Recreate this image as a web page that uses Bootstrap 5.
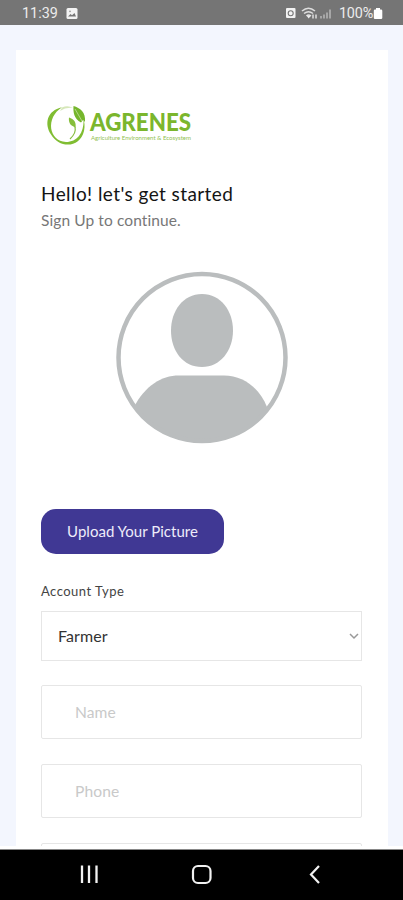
<!DOCTYPE html>
<html lang="en">
<head>
<meta charset="utf-8">
<meta name="viewport" content="width=device-width, initial-scale=1">
<title>Agrenes Sign Up</title>
<link href="https://cdn.jsdelivr.net/npm/bootstrap@5.3.0/dist/css/bootstrap.min.css" rel="stylesheet">
<style>
body{font-family:Lato,"Open Sans",sans-serif;height:900px;overflow:hidden;background:#fff}
.status-bar{height:25px;background:#757575;color:#ececec;font:14.4px/25px Roboto,sans-serif;padding:1px 20px 0 22px}
.page-area{height:821px;background:#f3f6fe;padding:25px 15px 0 16px}
.signup{height:796px;padding:48px 26px 0 25px}
.logo{display:block;height:56px;width:160px}
.heading{font-size:19px;line-height:24px;margin:28px 0 0;color:#141414;letter-spacing:.42px;white-space:nowrap}
.subhead{font-size:15.5px;line-height:24px;margin:2px 0 0;color:#777;letter-spacing:.1px;font-weight:400}
.avatar{display:block;width:174px;height:176px;margin:37px 0 0 73px}
.upload{width:183px;height:45px;margin-top:64px;border-radius:15px;background:#403894;color:#eeecfa;font-size:15px;letter-spacing:.02px;padding:0 0 1px}
.type-label{font-size:13px;line-height:20px;margin:27px 0 0;color:#444;letter-spacing:.48px}
.farm-select{height:50px;margin-top:10px;border:1px solid #e6e6e6;border-radius:0;padding:0 16px;color:#333;font-size:16px;letter-spacing:.1px;background-image:none}
.field{height:54px;border:1.5px solid #e6e6e6;border-radius:2px;padding:0 33px 1px;font-size:15.6px;letter-spacing:.1px}
.field::placeholder{color:#c9c9c9;opacity:1}
.fields{gap:25px}
.chevron{right:3px;top:21px}
.nav-keys{height:50px;background:#000}
.seam{height:4px;background:#fff;border-bottom:1px solid #888}
</style>
<script src="https://cdn.jsdelivr.net/npm/bootstrap@5.3.0/dist/js/bootstrap.bundle.min.js"></script>
</head>
<body>
<header class="status-bar d-flex justify-content-between align-items-center">
  <div class="d-flex align-items-center"><span>11:39</span>
    <svg class="ms-2" width="12" height="11" viewBox="0 0 12 11"><rect x=".5" width="11" height="11" rx="1.500" fill="#f3f3f3"/><path d="M2 8.500 4.500 6l1.500 1.300L8.500 5l1.500 3.500z" fill="#757575"/><circle cx="4" cy="3.300" r=".9" fill="#999"/></svg>
  </div>
  <div class="d-flex align-items-center">
    <svg width="54" height="16" viewBox="0 0 54 16" fill="none">
      <rect x="1" y="3" width="9.500" height="10" rx="1" fill="#f3f3f3"/><circle cx="5.700" cy="8.200" r="2.500" stroke="#757575" stroke-width="1.100"/>
      <path d="M17 6q6.500-5.500 13 0M19 8.500q4.500-3.500 9 0M21.500 11q2-2 4.500 0" stroke="#dedede" stroke-width="1.500"/><path d="m21.500 10.500 2.200 3 2.200-3z" fill="#eee"/>
      <path d="M28 9.500v4M31 13.500v-4" stroke="#eee" stroke-width="1.300"/>
      <path d="M36 13.500v-2.500M39 13.500v-4M42 13.500v-6M45 13.500v-9" stroke="#bdbdbd" stroke-width="1.400"/>
    </svg>
    <span style="letter-spacing:-.2px">100%</span>
    <svg width="10" height="13" viewBox="0 0 10 13"><path d="M3 1h4v1.500h1q1.300 0 1.300 1.300V11q0 1-1.300 1H2Q.8 12 .8 11V3.800q0-1.300 1.200-1.300h1z" fill="#fff"/></svg>
  </div>
</header>
<main class="page-area overflow-hidden">
  <section class="signup bg-white">
    <svg class="logo" viewBox="41 98 160 56">
      <path d="M62 107.300C47 110.500 44 124 51 134.500C59 148.500 80 148.500 84 131C85 126 84.500 122 83.500 120C84 133 77 142 66 142C49 141.500 45 118 62 107.300Z" fill="#80bd32"/>
      <path d="M62 107.500Q68 105 73 108Q66 107 60 111Z" fill="#d6e7ba"/>
      <path d="M73.500 106C80 108 86 112 85 122L83 120L81 122.500C74 119 73 112 73.500 106Z" fill="#75b62c"/>
      <path d="m75 109 7 12" stroke="#c4df9f" stroke-width=".8"/>
      <path d="M69 117.500C74 119 76.500 122 75.500 128L73.500 126.500C69.500 125 68.500 121 69 117.500Z" fill="#86be3b"/>
      <path d="M75 127Q76.500 133 70 139" fill="none" stroke="#88bd42" stroke-width="1.200"/>
      <text x="90" y="131" textLength="101" lengthAdjust="spacingAndGlyphs" font-family="Lato" font-weight="900" font-size="23.800" fill="#7bb62d">AGRENES</text>
      <text x="91" y="140" textLength="100" lengthAdjust="spacingAndGlyphs" font-family="Lato" font-size="5.500" fill="#91c151">Agriculture Environment &amp; Ecosystem</text>
    </svg>
    <h1 class="heading fw-normal">Hello! let's get started</h1>
    <p class="subhead">Sign Up to continue.</p>
    <svg class="avatar" viewBox="0 0 174 176">
      <defs><clipPath id="face"><circle cx="88" cy="88.500" r="85"/></clipPath></defs>
      <path clip-path="url(#face)" d="M20 138C31 117 47 106.500 65 106.500H110C130 106.500 146 120 153 138V176H20Z" fill="#babdbe"/>
      <path d="M88 25C107 25 119 42 119 61.500C119 82 106 98 88 98C69 98 57 82 57 61.500C57 42 69 25 88 25Z" fill="#babdbe"/>
      <circle cx="88" cy="88.500" r="83.500" fill="none" stroke="#babdbe" stroke-width="4.500"/>
    </svg>
    <button type="button" class="upload btn d-block border-0">Upload Your Picture</button>
    <label class="type-label d-block" for="kind">Account Type</label>
    <div class="position-relative">
      <select id="kind" class="farm-select form-select"><option>Farmer</option></select>
      <svg class="chevron position-absolute" width="10" height="8" viewBox="0 0 10 8"><path d="m1 2 4 4 4-4" fill="none" stroke="#999" stroke-width="1.500"/></svg>
    </div>
    <div class="fields d-flex flex-column mt-4">
      <input class="field form-control" placeholder="Name" aria-label="Name">
      <input class="field form-control" placeholder="Phone" aria-label="Phone">
      <input class="field form-control" aria-label="Email">
    </div>
  </section>
</main>
<div class="seam"></div>
<nav class="nav-keys d-flex justify-content-center">
  <svg width="403" height="50" viewBox="0 0 403 50" fill="none" stroke="#f2f2f2">
    <path d="M82 15.500V33M89 15.500V33M96.500 15.500V33" stroke-width="2.300"/>
    <rect x="193" y="16" width="17.500" height="17" rx="5" stroke-width="2.200"/>
    <path d="m319 16-8 8.500 8 8.500" stroke-width="2.200"/>
  </svg>
</nav>
</body>
</html>
